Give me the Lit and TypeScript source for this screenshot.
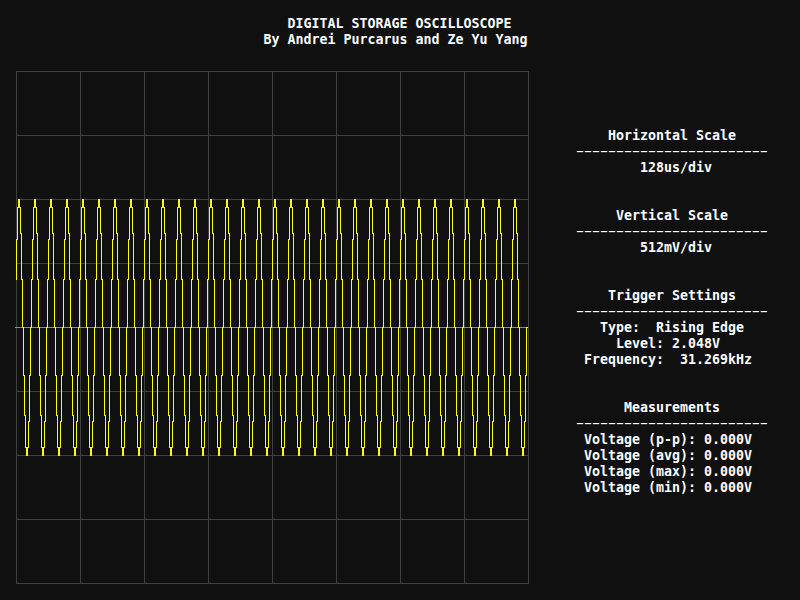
import { LitElement, html, css, svg } from "lit";
import { customElement } from "lit/decorators.js";

// One period of the trace: column offset, top and bottom sample rows.
const PERIOD: [number, number, number][] = [
  [0, 239, 279], [1, 207, 239], [2, 199, 207], [3, 199, 207],
  [4, 207, 233], [5, 233, 279], [6, 279, 327], [7, 327, 375],
  [8, 375, 415], [9, 415, 447], [10, 447, 455], [11, 447, 455],
  [12, 421, 447], [13, 375, 421], [14, 327, 375], [15, 279, 327],
];

const SECTIONS = [
  { title: "Horizontal Scale", rows: [" 128us/div"] },
  { title: "Vertical Scale", rows: [" 512mV/div"] },
  { title: "Trigger Settings", rows: ["Type:  Rising Edge", "Level: 2.048V ", "Frequency:  31.269kHz "] },
  { title: "Measurements", rows: ["Voltage (p-p): 0.000V ", "Voltage (avg): 0.000V ", "Voltage (max): 0.000V ", "Voltage (min): 0.000V "] },
];

@customElement("scope-plot")
export class ScopePlot extends LitElement {
  static styles = css`
    :host { display: block; width: 514px; height: 513px; }
    svg { display: block; shape-rendering: crispEdges; }
    .grid { fill: #404040; }
    .axis { fill: #8080d0; }
    .trace { fill: #ffff00; }
  `;
  render() {
    const lines = Array.from({ length: 9 }, (_, i) => i * 64);
    let d = "";
    for (let p = 0; p < 32; p++) {
      for (const [dx, top, bottom] of PERIOD) {
        // The last sample only reaches the zero line.
        const y = p === 31 && dx === 15 ? 327 : top;
        d += `M${16 + p * 16 + dx} ${y}h1v${bottom - y + 1}h-1z`;
      }
    }
    return html`<svg width="514" height="513" viewBox="15 71 514 513">
      <g class="grid">
        ${lines.map((v) => svg`<rect x=${16 + v} y="71" width="1" height="513"/><rect x="16" y=${71 + v} width="513" height="1"/>`)}
      </g>
      <rect class="axis" x="15" y="327" width="513" height="1"/>
      <path class="trace" d=${d}/>
    </svg>`;
  }
}

@customElement("app-root")
export class AppRoot extends LitElement {
  static styles = css`
    :host {
      display: block; width: 800px; height: 600px; overflow: hidden; box-sizing: border-box;
      background: #101010; color: #fff; padding-top: 16px;
      font: bold 13.29px/16px "DejaVu Sans Mono", monospace;
      white-space: pre;
    }
    header { text-align: center; height: 55px; padding-right: 9px; box-sizing: border-box; }
    .title { padding-left: 8px; }
    main { display: flex; padding-left: 15px; }
    aside { margin-left: 47px; width: 192px; padding-top: 57px; }
    section { margin-bottom: 32px; text-align: center; }
    .rule {
      width: 112px; height: 16px; text-align: left;
      font: 14px/16px "Liberation Serif", serif;
      transform: translateY(-1px) scaleX(1.7143); transform-origin: 0 0;
    }
  `;
  render() {
    return html`<header><div class="title">DIGITAL STORAGE OSCILLOSCOPE</div><div>By Andrei Purcarus and Ze Yu Yang</div></header><main><scope-plot></scope-plot><aside>${SECTIONS.map(
      (s) => html`<section><div>${s.title}</div><div class="rule">${"-".repeat(24)}</div>${s.rows.map((r) => html`<div>${r}</div>`)}</section>`
    )}</aside></main>`;
  }
}
